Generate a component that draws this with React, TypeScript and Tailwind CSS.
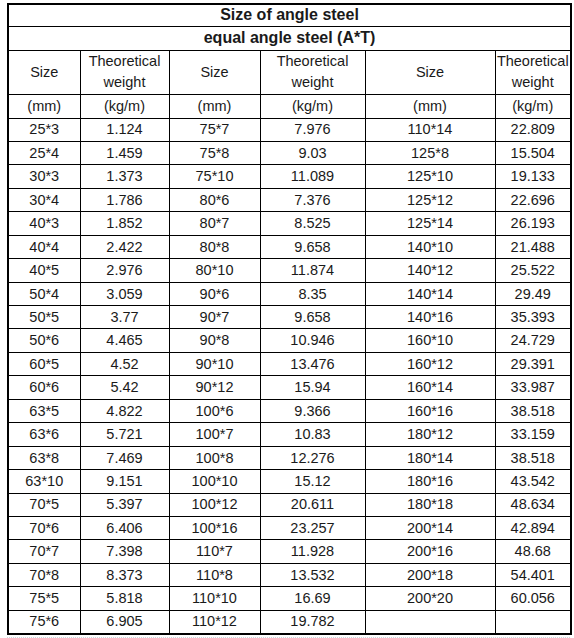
const rows: [string, string, string, string, string, string][] = [
  ["25*3", "1.124", "75*7", "7.976", "110*14", "22.809"],
  ["25*4", "1.459", "75*8", "9.03", "125*8", "15.504"],
  ["30*3", "1.373", "75*10", "11.089", "125*10", "19.133"],
  ["30*4", "1.786", "80*6", "7.376", "125*12", "22.696"],
  ["40*3", "1.852", "80*7", "8.525", "125*14", "26.193"],
  ["40*4", "2.422", "80*8", "9.658", "140*10", "21.488"],
  ["40*5", "2.976", "80*10", "11.874", "140*12", "25.522"],
  ["50*4", "3.059", "90*6", "8.35", "140*14", "29.49"],
  ["50*5", "3.77", "90*7", "9.658", "140*16", "35.393"],
  ["50*6", "4.465", "90*8", "10.946", "160*10", "24.729"],
  ["60*5", "4.52", "90*10", "13.476", "160*12", "29.391"],
  ["60*6", "5.42", "90*12", "15.94", "160*14", "33.987"],
  ["63*5", "4.822", "100*6", "9.366", "160*16", "38.518"],
  ["63*6", "5.721", "100*7", "10.83", "180*12", "33.159"],
  ["63*8", "7.469", "100*8", "12.276", "180*14", "38.518"],
  ["63*10", "9.151", "100*10", "15.12", "180*16", "43.542"],
  ["70*5", "5.397", "100*12", "20.611", "180*18", "48.634"],
  ["70*6", "6.406", "100*16", "23.257", "200*14", "42.894"],
  ["70*7", "7.398", "110*7", "11.928", "200*16", "48.68"],
  ["70*8", "8.373", "110*8", "13.532", "200*18", "54.401"],
  ["75*5", "5.818", "110*10", "16.69", "200*20", "60.056"],
  ["75*6", "6.905", "110*12", "19.782", "", ""],
];

const cell = "border border-black text-center align-middle p-0";

export default function App() {
  return (
    <div className="min-h-screen bg-white pl-[7px] pt-[3px] text-[#1a1a1a] [font-family:'Liberation_Sans',Arial,sans-serif]">
      <table className="w-[563px] table-fixed border-collapse border-2 border-black text-[14.5px] leading-none">
        <colgroup>
          <col className="w-[72px]" />
          <col className="w-[89px]" />
          <col className="w-[91px]" />
          <col className="w-[105px]" />
          <col className="w-[130px]" />
          <col className="w-[76px]" />
        </colgroup>
        <thead>
          <tr className="h-[22px]">
            <th colSpan={6} className={`${cell} text-[16px] font-bold`}>
              Size of angle steel
            </th>
          </tr>
          <tr className="h-[24px]">
            <th colSpan={6} className={`${cell} text-[16px] font-bold`}>
              equal angle steel (A*T)
            </th>
          </tr>
          <tr className="h-[44px]">
            {[0, 1, 2].map((i) => [
              <th key={`s${i}`} className={`${cell} font-normal`}>
                Size
              </th>,
              <th key={`w${i}`} className={`${cell} font-normal leading-[21px]`}>
                Theoretical
                <br />
                weight
              </th>,
            ])}
          </tr>
          <tr className="h-[24px]">
            {[0, 1, 2].map((i) => [
              <th key={`m${i}`} className={`${cell} font-normal`}>
                (mm)
              </th>,
              <th key={`k${i}`} className={`${cell} font-normal`}>
                (kg/m)
              </th>,
            ])}
          </tr>
        </thead>
        <tbody>
          {rows.map((r, i) => (
            <tr key={i} className="h-[23.45px]">
              {r.map((v, j) => (
                <td key={j} className={cell}>
                  {v}
                </td>
              ))}
            </tr>
          ))}
        </tbody>
      </table>
      <div className="mt-[2px] h-0 w-[563px] border-t border-dotted border-gray-300" />
    </div>
  );
}
